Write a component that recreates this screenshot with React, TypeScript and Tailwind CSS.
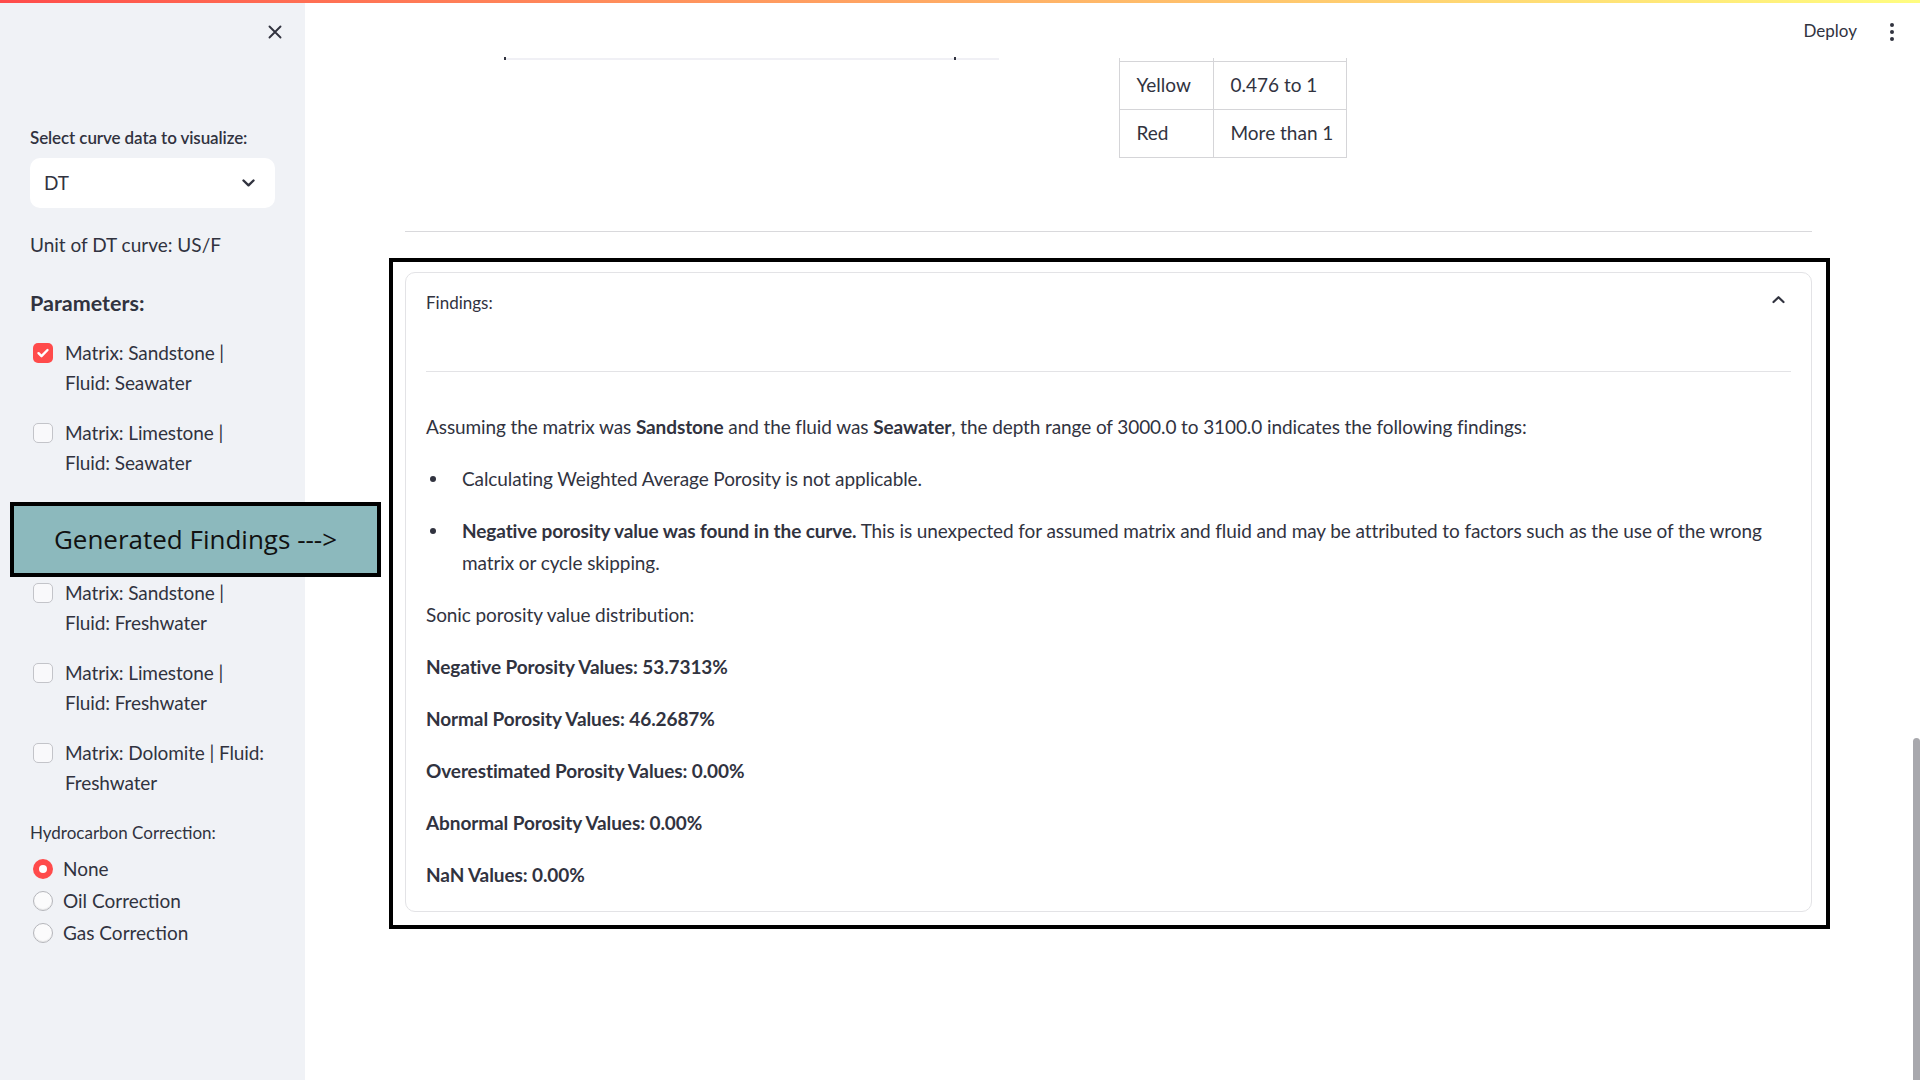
import { useState } from 'react';

const font = "font-['Lato','Noto_Sans',sans-serif]";

const options = [
  ['Matrix: Sandstone |', 'Fluid: Seawater'],
  ['Matrix: Limestone |', 'Fluid: Seawater'],
  ['Matrix: Dolomite | Fluid:', 'Seawater'],
  ['Matrix: Sandstone |', 'Fluid: Freshwater'],
  ['Matrix: Limestone |', 'Fluid: Freshwater'],
  ['Matrix: Dolomite | Fluid:', 'Freshwater'],
];

const corrections = ['None', 'Oil Correction', 'Gas Correction'];

const stats = [
  'Negative Porosity Values: 53.7313%',
  'Normal Porosity Values: 46.2687%',
  'Overestimated Porosity Values: 0.00%',
  'Abnormal Porosity Values: 0.00%',
  'NaN Values: 0.00%',
];

function Checkbox({ checked }: { checked: boolean }) {
  if (checked) {
    return (
      <span className="mt-[5px] flex h-[20px] w-[20px] shrink-0 items-center justify-center rounded-[5px] bg-[#ff4b4b]">
        <svg width="14" height="14" viewBox="0 0 14 14" fill="none">
          <path d="M2.5 7.2l3 3 6-6.2" stroke="white" strokeWidth="2.4" strokeLinecap="round" strokeLinejoin="round" />
        </svg>
      </span>
    );
  }
  return <span className="mt-[5px] h-[20px] w-[20px] shrink-0 rounded-[5px] border border-[#c3c4c9] bg-[#f9f9fb]" />;
}

function Sidebar() {
  const [checked, setChecked] = useState(0);
  const [radio, setRadio] = useState(0);

  return (
    <aside className="flex h-full w-[305px] shrink-0 flex-col bg-[#f0f2f6] px-[30px] text-[#31333f]">
      <div className="flex h-[64px] items-center justify-end">
        <svg className="mr-[-7px]" width="14" height="14" viewBox="0 0 14 14" fill="none">
          <path d="M1.5 1.5l11 11M12.5 1.5l-11 11" stroke="#31333f" strokeWidth="1.9" strokeLinecap="round" />
        </svg>
      </div>

      <div className="mt-[60px] text-[17px] font-semibold leading-[28px] tracking-[-0.1px]">Select curve data to visualize:</div>
      <div className="mt-[6px] flex h-[50px] items-center justify-between rounded-[10px] bg-white pl-[14px] pr-[20px]">
        <span className="text-[19px]">DT</span>
        <svg width="13" height="8" viewBox="0 0 13 8" fill="none">
          <path d="M1.5 1.5l5 4.8 5-4.8" stroke="#31333f" strokeWidth="2.4" strokeLinecap="round" strokeLinejoin="round" />
        </svg>
      </div>

      <div className="mt-[21px] text-[19px] leading-[32px]">Unit of DT curve: US/F</div>
      <div className="mt-[24px] text-[21.5px] font-bold leading-[36px]">Parameters:</div>

      <div className="mt-[17px] flex flex-col gap-[20px]">
        {options.map((opt, i) => (
          <button
            key={i}
            onClick={() => setChecked(i)}
            className={`ml-[3px] flex gap-[12px] text-left ${i === 2 ? 'invisible' : ''}`}
          >
            <Checkbox checked={checked === i} />
            <span className="text-[19px] leading-[30px] tracking-[-0.1px]">
              <span className="block whitespace-nowrap">{opt[0]}</span>
              <span className="block whitespace-nowrap">{opt[1]}</span>
            </span>
          </button>
        ))}
      </div>

      <div className="mt-[21px] text-[17px] leading-[28px]">Hydrocarbon Correction:</div>
      <div className="mt-[6px] flex flex-col">
        {corrections.map((c, i) => (
          <button key={c} onClick={() => setRadio(i)} className="ml-[3px] flex h-[32px] items-center gap-[10px] text-left">
            {radio === i ? (
              <span className="flex h-[20px] w-[20px] items-center justify-center rounded-full bg-[#ff4b4b]">
                <span className="h-[8px] w-[8px] rounded-full bg-white" />
              </span>
            ) : (
              <span className="h-[20px] w-[20px] rounded-full border border-[#b5b6bb] bg-[#fbfbfc] shadow-[inset_0_-1px_1px_rgba(0,0,0,0.08)]" />
            )}
            <span className="text-[19px]">{c}</span>
          </button>
        ))}
      </div>
    </aside>
  );
}

function Findings() {
  const [open, setOpen] = useState(true);

  return (
    <div className="relative mt-[40px]">
      <div className="rounded-[10px] border border-[#e3e3e6] px-[20px]">
        <button onClick={() => setOpen(!open)} className="flex h-[60px] w-full items-center justify-between">
          <span className="text-[17px]">Findings:</span>
          <svg className="mr-[6px] mt-[-6px]" width="13" height="9" viewBox="0 0 13 9" fill="none">
            <path d="M1.5 7l5-4.8 5 4.8" stroke="#31333f" strokeWidth="2.2" strokeLinecap="round" strokeLinejoin="round" />
          </svg>
        </button>

        {open && (
          <div className="pb-[20px] text-[19px] leading-[32px] tracking-[-0.1px]">
            <div className="mt-[38px] h-px bg-[#e3e3e6]" />
            <p className="mt-[39px]">
              Assuming the matrix was <b className="font-bold">Sandstone</b> and the fluid was{' '}
              <b className="font-bold">Seawater</b>, the depth range of 3000.0 to 3100.0 indicates the following findings:
            </p>
            <ul className="mt-[20px] flex flex-col gap-[20px]">
              <li className="flex pl-[4px]">
                <span className="mt-[13px] h-[6px] w-[6px] shrink-0 rounded-full bg-[#31333f]" />
                <span className="ml-[26px]">Calculating Weighted Average Porosity is not applicable.</span>
              </li>
              <li className="flex pl-[4px]">
                <span className="mt-[13px] h-[6px] w-[6px] shrink-0 rounded-full bg-[#31333f]" />
                <span className="ml-[26px]">
                  <span className="whitespace-nowrap">
                    <b className="font-bold">Negative porosity value was found in the curve.</b> This is unexpected for
                    assumed matrix and fluid and may be attributed to factors such as the use of the wrong
                  </span>
                  <br />
                  matrix or cycle skipping.
                </span>
              </li>
            </ul>
            <p className="mt-[20px]">Sonic porosity value distribution:</p>
            {stats.map((s) => (
              <p key={s} className="mt-[20px] font-bold">
                {s}
              </p>
            ))}
          </div>
        )}
      </div>
      {/* annotation frame */}
      <div className="pointer-events-none absolute bottom-[-17px] left-[-16px] right-[-18px] top-[-14px] border-[4px] border-black" />
    </div>
  );
}

export default function App() {
  return (
    <div className={`relative flex h-screen w-full overflow-hidden bg-white text-[#31333f] ${font}`}>
      <div className="absolute left-0 right-0 top-0 z-10 h-[3px] bg-gradient-to-r from-[#ff4b4b] to-[#fffd80]" />

      <Sidebar />

      <main className="flex min-w-0 flex-1 flex-col">
        <header className="flex h-[58px] items-start justify-end pr-[26px] pt-[19px]">
          <span className="text-[17px] leading-[24px]">Deploy</span>
          <span className="ml-[33px] mt-[4px] flex flex-col items-center gap-[3px]">
            <span className="h-[4px] w-[4px] rounded-full bg-[#31333f]" />
            <span className="h-[4px] w-[4px] rounded-full bg-[#31333f]" />
            <span className="h-[4px] w-[4px] rounded-full bg-[#31333f]" />
          </span>
        </header>

        <div className="pl-[100px] pr-[108px]">
          <div className="grid grid-cols-2 gap-[20px]">
            <div className="pl-[99px] pr-[99px]">
              <div className="relative h-[2px] w-[495px] bg-[#f0f0f5]">
                <span className="absolute left-0 top-[-1px] h-[3px] w-[2px] bg-[#31333f]" />
                <span className="absolute left-[450px] top-[-1px] h-[3px] w-[2px] bg-[#31333f]" />
              </div>
            </div>
            <div>
              <table className="border-collapse text-[19px]">
                <tbody>
                  <tr className="h-[3px]">
                    <td className="w-[94px] border-x border-[#d5d5d8] p-0" />
                    <td className="w-[133px] border-x border-[#d5d5d8] p-0" />
                  </tr>
                  <tr className="h-[48px]">
                    <td className="border border-[#d5d5d8] pl-[17px]">Yellow</td>
                    <td className="border border-[#d5d5d8] pl-[17px]">0.476 to 1</td>
                  </tr>
                  <tr className="h-[48px]">
                    <td className="border border-[#d5d5d8] pl-[17px]">Red</td>
                    <td className="whitespace-nowrap border border-[#d5d5d8] pl-[17px] pr-[12px]">More than 1</td>
                  </tr>
                </tbody>
              </table>
            </div>
          </div>

          <div className="mt-[73px] h-px bg-[#d9d9dc]" />

          <Findings />
        </div>
      </main>

      <div className="pointer-events-none absolute left-[10px] top-[502px] flex h-[75px] w-[371px] items-center justify-center border-[4px] border-black bg-[#8cb9bd]">
        <span className="font-['Open_Sans',sans-serif] text-[26px] text-[#111]">Generated Findings ---&gt;</span>
      </div>

      <div className="absolute bottom-0 right-0 h-[342px] w-[7px] rounded-t-full bg-[#a8a8ad]" />
    </div>
  );
}
